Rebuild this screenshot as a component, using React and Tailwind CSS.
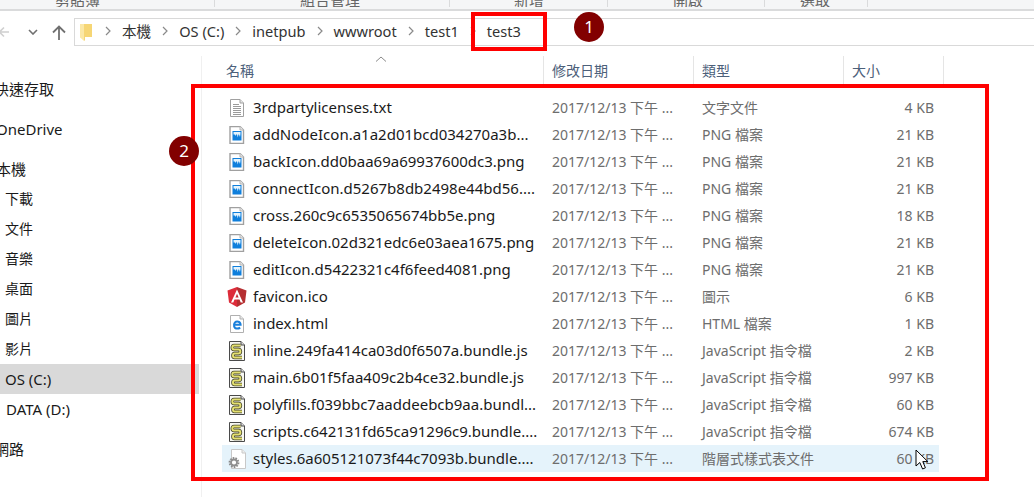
const font = { fontFamily: '"Noto Sans", "Noto Sans CJK TC", sans-serif' }

function TxtIcon() {
  return (
    <svg width="16" height="18" viewBox="0 0 16 18" className="shrink-0">
      <path d="M1.5 .5H11L14.5 4V17.5H1.5Z" fill="#fff" stroke="#a0a0a0" />
      <path d="M11 .5V4H14.5" fill="#e8e8e8" stroke="#a0a0a0" />
      <path d="M4 5.5H10M4 7.5H12M4 9.5H12M4 11.5H12M4 13.5H12M4 15.5H12" stroke="#9a9a9a" />
    </svg>
  )
}

function PngIcon() {
  return (
    <svg width="16" height="18" viewBox="0 0 16 18" className="shrink-0">
      <path d="M1 .5H11L14.5 4V17.5H1Z" fill="#fff" stroke="#a0a0a0" strokeWidth="1.4" />
      <path d="M11 .5V4H14.5" fill="#e8e8e8" stroke="#b4b4b4" />
      <rect x="3.5" y="5" width="9" height="9.5" fill="#0f7fdc" />
      <path d="M4.5 6H11.5V8L11 11L10 8.5H9.4L8.8 11.5L8 8.5H7L6.4 10L5.8 8.5H4.5Z" fill="#e4f3fc" />
    </svg>
  )
}

function AngularIcon() {
  return (
    <svg width="20" height="20" viewBox="0 0 20 20" className="shrink-0">
      <path d="M10 0L19.5 3.4L18 15.6L10 20Z" fill="#b52e31" />
      <path d="M10 0L.5 3.4L2 15.6L10 20Z" fill="#dd2c3a" />
      <path d="M10 2.5L4 15.5H6.3L7.5 12.5H12.5L13.7 15.5H16ZM8.4 10.6L10 6.8L11.6 10.6Z" fill="#fff" />
    </svg>
  )
}

function HtmlIcon() {
  return (
    <svg width="16" height="18" viewBox="0 0 16 18" className="shrink-0">
      <path d="M1.5 .5H11L14.5 4V17.5H1.5Z" fill="#fff" stroke="#b0b0b0" />
      <path d="M11 .5V4H14.5" fill="#e8e8e8" stroke="#b0b0b0" />
      <path d="M4.8 9.8H11.6C11.6 6.4 7.6 5.6 5.8 7.6C4 9.8 5 13.6 8.2 13.6C9.4 13.6 10.4 13.2 11.2 12.6" fill="none" stroke="#1a80dc" strokeWidth="2" />
    </svg>
  )
}

function JsIcon() {
  return (
    <svg width="18" height="20" viewBox="0 0 18 20" className="shrink-0">
      <path d="M1.5 .5H13L16.5 4V19.5H1.5Z" fill="#f8f8f2" stroke="#4a4a4a" />
      <path d="M13 .5V4H16.5" fill="#ddd" stroke="#4a4a4a" />
      <path d="M12.5 4.5H6C3.8 4.5 3.8 8.5 6 8.5H10.5C13 8.5 13 12.5 10.5 12.5H6.5C4.5 12.5 4.5 16.5 6.5 16.5H14" fill="none" stroke="#44442a" strokeWidth="3.6" />
      <path d="M12.5 4.5H6C3.8 4.5 3.8 8.5 6 8.5H10.5C13 8.5 13 12.5 10.5 12.5H6.5C4.5 12.5 4.5 16.5 6.5 16.5H14" fill="none" stroke="#e4e070" strokeWidth="2" />
    </svg>
  )
}

function CssIcon() {
  return (
    <svg width="20" height="20" viewBox="0 0 20 20" className="shrink-0">
      <path d="M4.5 .5H15L18.5 4V19.5H4.5Z" fill="#fff" stroke="#c8c8c8" />
      <path d="M15 .5V4H18.5" fill="#eee" stroke="#c8c8c8" />
      <circle cx="7" cy="13.5" r="4.4" fill="none" stroke="#8a8a8a" strokeWidth="2" strokeDasharray="1.6 1.1" />
      <circle cx="7" cy="13.5" r="3" fill="none" stroke="#8f8f8f" strokeWidth="1.8" />
    </svg>
  )
}

const icons = { txt: TxtIcon, png: PngIcon, ng: AngularIcon, html: HtmlIcon, js: JsIcon, css: CssIcon }

const files = [
  { icon: 'txt', name: '3rdpartylicenses.txt', type: '文字文件', size: '4 KB' },
  { icon: 'png', name: 'addNodeIcon.a1a2d01bcd034270a3b...', type: 'PNG 檔案', size: '21 KB' },
  { icon: 'png', name: 'backIcon.dd0baa69a69937600dc3.png', type: 'PNG 檔案', size: '21 KB' },
  { icon: 'png', name: 'connectIcon.d5267b8db2498e44bd56....', type: 'PNG 檔案', size: '21 KB' },
  { icon: 'png', name: 'cross.260c9c6535065674bb5e.png', type: 'PNG 檔案', size: '18 KB' },
  { icon: 'png', name: 'deleteIcon.02d321edc6e03aea1675.png', type: 'PNG 檔案', size: '21 KB' },
  { icon: 'png', name: 'editIcon.d5422321c4f6feed4081.png', type: 'PNG 檔案', size: '21 KB' },
  { icon: 'ng', name: 'favicon.ico', type: '圖示', size: '6 KB' },
  { icon: 'html', name: 'index.html', type: 'HTML 檔案', size: '1 KB' },
  { icon: 'js', name: 'inline.249fa414ca03d0f6507a.bundle.js', type: 'JavaScript 指令檔', size: '2 KB' },
  { icon: 'js', name: 'main.6b01f5faa409c2b4ce32.bundle.js', type: 'JavaScript 指令檔', size: '997 KB' },
  { icon: 'js', name: 'polyfills.f039bbc7aaddeebcb9aa.bundl...', type: 'JavaScript 指令檔', size: '60 KB' },
  { icon: 'js', name: 'scripts.c642131fd65ca91296c9.bundle....', type: 'JavaScript 指令檔', size: '674 KB' },
  { icon: 'css', name: 'styles.6a605121073f44c7093b.bundle....', type: '階層式樣式表文件', size: '60 KB', selected: true },
]

const ribbon = [
  { label: '剪貼簿', cls: 'w-[215px] pl-[55px]' },
  { label: '組合管理', cls: 'w-[235px] pl-[85px]' },
  { label: '新增', cls: 'w-[158px] pl-[64px]' },
  { label: '開啟', cls: 'w-[157px] pl-[65px]' },
  { label: '選取', cls: 'w-[103px] pl-[35px]' },
]

const crumbs = ['本機', 'OS (C:)', 'inetpub', 'wwwroot', 'test1', 'test3']

const nav = [
  { label: '快速存取', cls: 'h-[40px] -ml-[6px]' },
  { label: 'OneDrive', cls: 'h-[40px] -ml-[4px]' },
  { label: '本機', cls: 'h-[30px] mt-[5px] -ml-[4px]' },
  { label: '下載', cls: 'h-[30px] pl-[5px] text-[14px]' },
  { label: '文件', cls: 'h-[30px] pl-[5px] text-[14px]' },
  { label: '音樂', cls: 'h-[30px] pl-[5px] text-[14px]' },
  { label: '桌面', cls: 'h-[30px] pl-[5px] text-[14px]' },
  { label: '圖片', cls: 'h-[30px] pl-[5px] text-[14px]' },
  { label: '影片', cls: 'h-[30px] pl-[5px] text-[14px]' },
  { label: 'OS (C:)', cls: 'h-[30px] pl-[5px] bg-[#d9d9d9] w-[199px]' },
  { label: 'DATA (D:)', cls: 'h-[30px] pl-[6px]' },
  { label: '網路', cls: 'h-[50px] -ml-[6px]' },
]

function Chevron() {
  return (
    <svg width="6" height="10" viewBox="0 0 6 10" className="shrink-0">
      <path d="M1 1L5 5L1 9" fill="none" stroke="#8a8a8a" strokeWidth="1.2" />
    </svg>
  )
}

function Badge({ n, className }) {
  return (
    <div className={`absolute w-[30px] h-[30px] rounded-full bg-[#820000] text-white text-[17px] flex items-center justify-center ${className}`}>
      {n}
    </div>
  )
}

export default function App() {
  return (
    <div style={font} className="relative w-[1034px] h-[497px] overflow-hidden bg-white text-[15px] text-[#1a1a1a]">
      {/* ribbon labels, cut off by the crop */}
      <div className="flex h-[11px] bg-[#f5f6f7] border-b-2 border-[#dadbdc] overflow-hidden">
        {ribbon.map((r) => (
          <div key={r.label} className={`${r.cls} h-[7px] shrink-0 border-r border-[#dadbdc] text-[#666] text-[15px] leading-[0px] overflow-hidden`}>
            {r.label}
          </div>
        ))}
      </div>

      {/* nav bar */}
      <div className="flex items-start h-[45px] pt-[7px]">
        <div className="flex items-center w-[74px] h-[28px] shrink-0">
          <svg width="10" height="14" viewBox="0 0 10 14">
            <path d="M0 7H9M4 2.5L-.5 7L4 11.5" fill="none" stroke="#d0d0d0" strokeWidth="1.6" />
          </svg>
          <svg width="10" height="6" viewBox="0 0 10 6" className="ml-[18px]">
            <path d="M1 1L5 5L9 1" fill="none" stroke="#707070" strokeWidth="1.6" />
          </svg>
          <svg width="14" height="15" viewBox="0 0 14 15" className="ml-[14px]">
            <path d="M7 15V1.5M1 7.5L7 1.5L13 7.5" fill="none" stroke="#707070" strokeWidth="1.8" />
          </svg>
        </div>
        <div className="flex-1 h-[28px] border border-r-0 border-[#d9d9d9] flex items-center pl-[5px]">
          <svg width="13" height="17" viewBox="0 0 13 17" className="shrink-0">
            <path d="M0 0H12V13H5V17L0 13Z" fill="#f6d675" />
            <path d="M0 0H4V17L0 13Z" fill="#fbe8a6" />
          </svg>
          <div className="flex items-center gap-[11px] ml-[12px] pb-[1px]">
            {crumbs.map((c) => (
              <div key={c} className="flex items-center gap-[11px]">
                <Chevron />
                <span className="text-[14.6px] text-[#333]">{c}</span>
              </div>
            ))}
          </div>
        </div>
      </div>

      <div className="flex">
        {/* sidebar */}
        <div className="w-[202px] shrink-0 border-r border-[#f0f0f0] h-[441px] pt-[13px]">
          {nav.map((n) => (
            <div key={n.label} className={`flex items-center leading-[20px] ${n.cls}`}>
              {n.label}
            </div>
          ))}
        </div>

        {/* file list */}
        <div className="flex-1">
          <div className="flex h-[28px] text-[#4c607a] text-[14px]">
            <div className="relative w-[342px] pl-[24px] flex items-center border-r border-[#e5e5e5]">
              名稱
              <svg width="12" height="6" viewBox="0 0 12 6" className="absolute left-[173px] top-[0px]">
                <path d="M1 5.5L6 1L11 5.5" fill="none" stroke="#8a8a8a" />
              </svg>
            </div>
            <div className="w-[150px] pl-[8px] flex items-center border-r border-[#e5e5e5]">修改日期</div>
            <div className="w-[150px] pl-[8px] flex items-center border-r border-[#e5e5e5]">類型</div>
            <div className="w-[100px] pl-[8px] flex items-center border-r border-[#e5e5e5]">大小</div>
          </div>

          <div className="pl-[20px] pt-[10px]">
            {files.map((f) => {
              const Icon = icons[f.icon]
              return (
                <div key={f.name} className={`flex items-center h-[27px] w-[717px] ${f.selected ? 'bg-[#e5f3fb]' : ''}`}>
                  <div className="w-[31px] shrink-0 flex justify-center pr-[1px]">
                    <Icon />
                  </div>
                  <div className="w-[299px] shrink-0 whitespace-nowrap overflow-hidden">{f.name}</div>
                  <div className="w-[150px] shrink-0 text-[#6d6d6d] text-[14px] whitespace-nowrap">2017/12/13 下午 ...</div>
                  <div className="w-[150px] shrink-0 text-[#6d6d6d] text-[14px] whitespace-nowrap">{f.type}</div>
                  <div className="flex-1 text-right pr-[5px] text-[#6d6d6d] text-[14px]">{f.size}</div>
                </div>
              )
            })}
          </div>
        </div>
      </div>

      {/* annotations drawn over the screenshot */}
      <div className="absolute left-[471px] top-[12px] w-[76px] h-[39px] border-4 border-[#ff0000]" />
      <div className="absolute left-[191px] top-[84px] w-[798px] h-[397px] border-4 border-[#ff0000]" />
      <Badge n="1" className="left-[574px] top-[12px]" />
      <Badge n="2" className="left-[169px] top-[136px]" />

      <svg width="14" height="22" viewBox="0 0 14 22" className="absolute left-[915px] top-[449px]">
        <path d="M1 1V17L4.8 13.5L7.6 20L10.4 18.8L7.8 12.6H12.8Z" fill="#fff" stroke="#000" />
      </svg>
    </div>
  )
}
